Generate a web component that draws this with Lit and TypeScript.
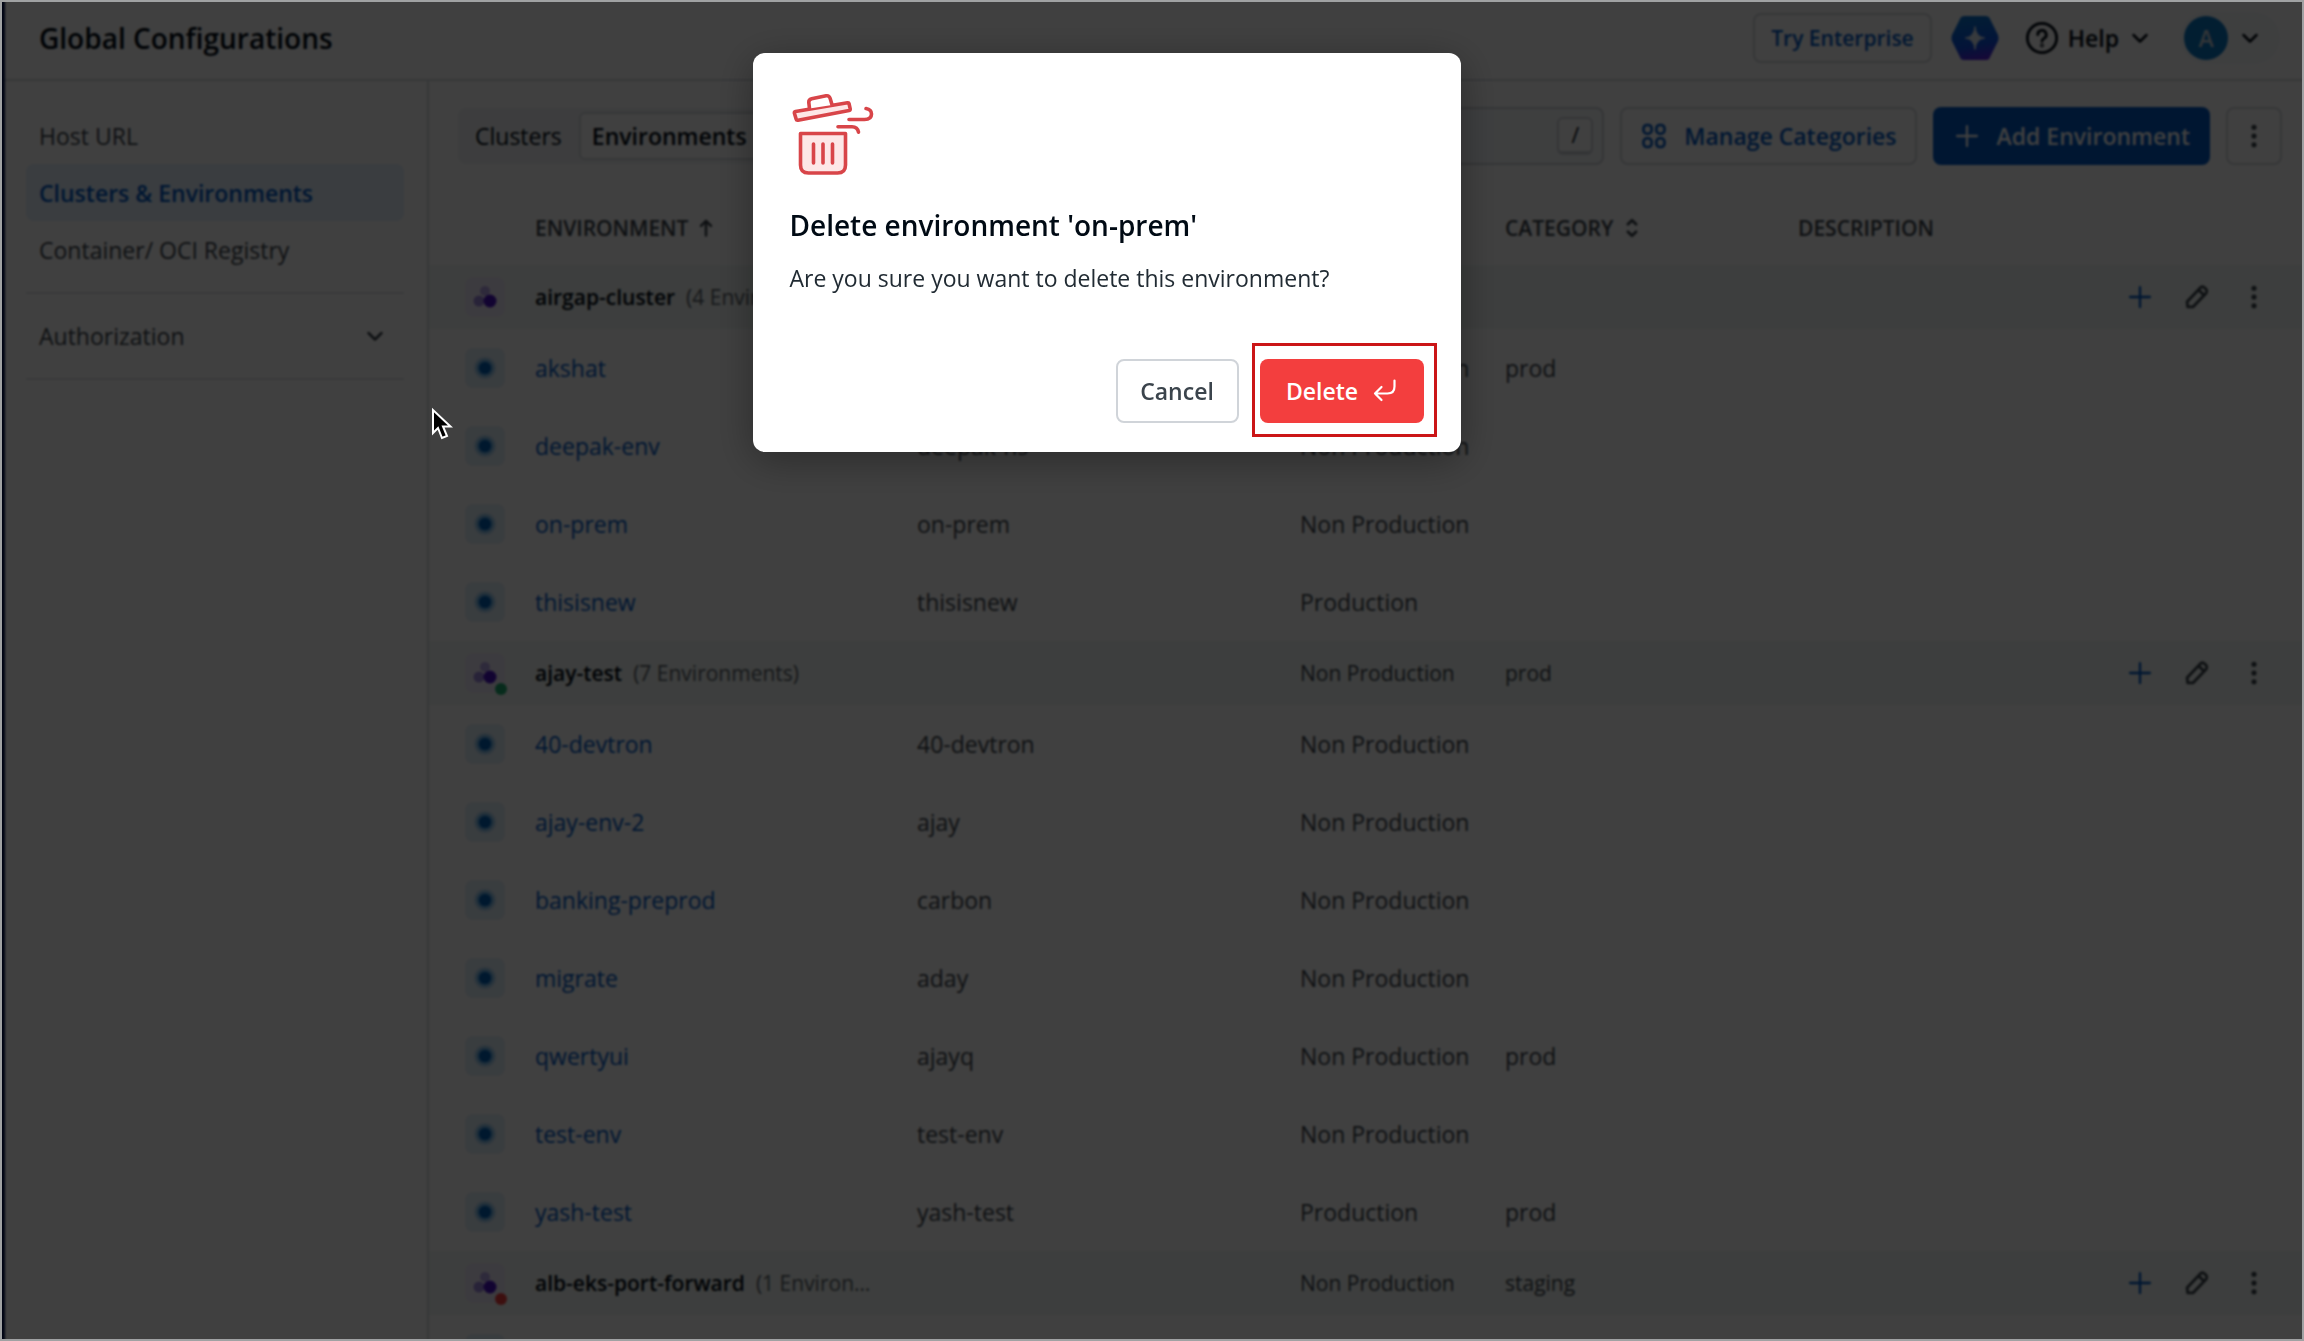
import { LitElement, html, css, svg, nothing } from "lit";
import { customElement } from "lit/decorators.js";

interface Env { name: string; ns: string; type: string; category?: string }
interface Cluster { name: string; count: string; type: string; category?: string; status?: string; envs: Env[] }

const NP = "Non Production";
const CLUSTERS: Cluster[] = [
  {
    name: "airgap-cluster", count: "(4 Environments)", type: NP, envs: [
      { name: "akshat", ns: "akshat", type: NP, category: "prod" },
      { name: "deepak-env", ns: "deepak-ns", type: NP },
      { name: "on-prem", ns: "on-prem", type: NP },
      { name: "thisisnew", ns: "thisisnew", type: "Production" },
    ],
  },
  {
    name: "ajay-test", count: "(7 Environments)", type: NP, category: "prod", status: "ok", envs: [
      { name: "40-devtron", ns: "40-devtron", type: NP },
      { name: "ajay-env-2", ns: "ajay", type: NP },
      { name: "banking-preprod", ns: "carbon", type: NP },
      { name: "migrate", ns: "aday", type: NP },
      { name: "qwertyui", ns: "ajayq", type: NP, category: "prod" },
      { name: "test-env", ns: "test-env", type: NP },
      { name: "yash-test", ns: "yash-test", type: "Production", category: "prod" },
    ],
  },
  {
    name: "alb-eks-port-forward", count: "(1 Environment)", type: NP, category: "staging", status: "bad", envs: [
      { name: "", ns: "", type: "" },
    ],
  },
];

const icon = (size: number, body: unknown) => html`<svg width=${size} height=${size} viewBox="0 0 24 24" fill="none"
  stroke="currentColor" stroke-width="2" stroke-linecap="round" stroke-linejoin="round" aria-hidden="true">${body}</svg>`;

const plus = icon(28, svg`<path d="M12 3.5v17M3.5 12h17"/>`);
const chevron = icon(24, svg`<path d="M5.500 9l6.500 6.500L18.500 9" stroke-width="2.500"/>`);
const kebab = icon(28, svg`<g fill="currentColor" stroke="none"><circle cx="12" cy="4.500" r="2.200"/><circle cx="12" cy="12" r="2.200"/><circle cx="12" cy="19.500" r="2.200"/></g>`);
const pencil = icon(28, svg`<path d="M4 20.500l-.5-4.500L15.500 3.500q1.500-1 3 .5l1.500 1.500q1 1.500 0 3L8.500 20.500zM13.500 6l4.500 4.500" stroke-width="2.400"/>`);
const grid = icon(28, svg`<g stroke-width="2.200"><rect x="3" y="2.500" width="7" height="7.500" rx="3"/><rect x="14" y="2.500" width="7" height="7.500" rx="3"/><rect x="3" y="14" width="7" height="7.500" rx="3"/><rect x="14" y="14" width="7" height="7.500" rx="3"/></g>`);
const sortUp = icon(20, svg`<path d="M12 21V4M6 9.500L12 3.500l6 6" stroke-width="3"/>`);
const sortBoth = icon(22, svg`<path d="M7.500 8L12 3.500 16.500 8M7.500 16l4.500 4.500 4.500-4.500" stroke-width="3"/>`);

@customElement("app-root")
export class AppRoot extends LitElement {
  static styles = css`
    :host { display: block; font-family: "Open Sans", "Noto Sans", sans-serif; font-size: 23px; line-height: 36px; color: #000a14; }
    * { box-sizing: border-box; }
    button, input { font: inherit; color: inherit; }
    button { background: none; border: 0; padding: 0; cursor: pointer; display: inline-flex; align-items: center; justify-content: center; }
    a { text-decoration: none; color: inherit; }
    svg { display: block; flex: none; }
    .shell { height: 100vh; overflow: hidden; display: flex; flex-direction: column; background: #fff; border-left: 5px solid #00124d; }
    .top { flex: none; height: 81px; border-bottom: 2px solid #d6dbdf; padding: 0 24px 4px 34px; display: flex; align-items: center; }
    h1 { margin: 0; flex: 1; font-size: 28px; font-weight: 600; }
    .tools { display: flex; align-items: center; }
    .outline { border: 2px solid #d6dade; border-radius: 8px; color: #0058c4; font-weight: 600; }
    .try { height: 50px; padding: 0 16px; font-size: 21px; }
    .spark { margin: 0 25px 0 18px; }
    .help { gap: 9px; font-weight: 600; }
    .user .chev { margin-left: 2px; }
    .user { margin-left: 28px; height: 52px; padding: 0 18px 0 4px; border-radius: 26px; background: #f7fafc; gap: 8px; }
    .avatar { width: 44px; height: 44px; border-radius: 50%; background: #0a78c4; color: #c5d2dc; display: grid; place-items: center; font-weight: 600; }
    .body { flex: 1; min-height: 0; display: flex; }
    .side { flex: none; width: 424px; border-right: 2px solid #d6dbdf; padding: 26px 23px 0 21px; display: flex; flex-direction: column; }
    .side a { height: 57px; padding: 0 13px; display: flex; align-items: center; border-radius: 8px; color: #3b444c; }
    .side a.on { background: #e5f2ff; color: #0058c4; font-weight: 600; }
    .rule { border: 0; border-top: 2px solid #e3e6ea; margin: 14px 0; width: 100%; }
    .auth { justify-content: space-between; height: 56px; padding: 0 17px 0 13px; color: #3b444c; }
    main { flex: 1; min-width: 0; display: flex; flex-direction: column; }
    .bar { flex: none; height: 110px; padding: 0 22px 0 29px; display: flex; align-items: center; gap: 16px; }
    .seg { display: flex; align-items: center; height: 56px; padding: 4px; background: #f2f4f6; border-radius: 8px; }
    .seg button { height: 48px; padding: 0 13px; border-radius: 6px; }
    .seg .on { background: #fff; font-weight: 600; border: 2px solid #d6dbdf; margin-left: 4px; padding: 0 11px; }
    .search { margin-left: auto; width: 380px; height: 58px; border: 2px solid #d0d4d9; border-radius: 8px; background: #f7fafc; display: flex; align-items: center; padding: 0 9px 0 16px; }
    .search input { flex: 1; min-width: 0; border: 0; background: none; outline: 0; }
    kbd { width: 36px; height: 38px; border: 2px solid #d0d4d9; border-bottom-width: 4px; border-radius: 6px; background: #fff; font: inherit; font-size: 21px; line-height: 32px; text-align: center; }
    .act { height: 58px; padding: 0 18px; gap: 16px; border-radius: 8px; font-weight: 600; }
    .primary { padding: 0 20px; background: #0058c4; color: #fff; }
    .more { width: 56px; height: 58px; color: #3b444c; }
    table { width: 100%; table-layout: fixed; border-collapse: collapse; text-align: left; }
    .c-icon { width: 106px; } .c-name { width: 382px; } .c-ns { width: 383px; } .c-type { width: 205px; } .c-cat { width: 293px; } .c-act { width: 193px; }
    th, td { padding: 0; white-space: nowrap; }
    th { height: 74px; font-weight: 600; font-size: 21px; color: #3b444c; }
    th button { gap: 8px; font-weight: 600; }
    .env td { height: 78px; }
    .env a { color: #0058c4; }
    .env { color: #3b444c; }
    .group { background: #f2f7f5; font-size: 21px; color: #3b444c; }
    .group td { height: 64px; }
    .gname { display: flex; gap: 11px; padding-right: 36px; }
    .gname b { font-weight: 600; color: #000a14; }
    .gname span { overflow: hidden; text-overflow: ellipsis; color: #596168; }
    .ico { margin-left: 36px; }
    .acts { display: flex; }
    .acts button { width: 57px; height: 48px; }
    .acts .add { color: #0058c4; }
    .veil { position: fixed; inset: 0; background: rgba(0, 0, 0, 0.75); backdrop-filter: blur(1px); display: flex; justify-content: center; align-items: flex-start; padding: 53px 91px 0 0; }
    .frame { position: fixed; inset: 0; pointer-events: none; border: 2px solid #a0a2a3; }
    .dialog { width: 708px; background: #fff; border-radius: 12px; padding: 37px 37px 29px; display: flex; flex-direction: column; box-shadow: 0 8px 40px rgba(0, 0, 0, 0.35); }
    .dialog h2 { margin: 29px 0 0; font-size: 28px; line-height: 40px; font-weight: 600; }
    .dialog p { margin: 15px 0 0; color: #212b33; }
    .foot { display: flex; justify-content: flex-end; gap: 21px; margin-top: 63px; }
    .foot button { height: 64px; border-radius: 8px; font-weight: 600; }
    .cancel { width: 123px; border: 2px solid #d0d4d9; color: #3b444c; }
    .delete { width: 164px; background: #f33e3e; color: #fff; gap: 15px; position: relative; }
    .mark { position: absolute; inset: -16px -13px -14px -8px; border: 3px solid #cb1517; pointer-events: none; }
    .cursor { position: fixed; left: 430px; top: 407px; }
  `;

  private row(e: Env) {
    return html`<tr class="env">
      <td><svg class="ico" width="40" height="40" viewBox="0 0 40 40" aria-hidden="true"><rect width="40" height="40" rx="8" fill="#e4f1fa"/><circle cx="20" cy="20" r="11" fill="#b4d8f2"/><circle cx="20" cy="20" r="8.500" fill="#6aaee2"/><circle cx="20" cy="20" r="6" fill="#0060b8"/></svg></td>
      <td>${e.name ? html`<a href="#${e.name}">${e.name}</a>` : nothing}</td><td>${e.ns}</td><td>${e.type}</td><td>${e.category ?? ""}</td><td></td><td></td>
    </tr>`;
  }

  private group(c: Cluster) {
    return html`<tr class="group">
      <td><svg class="ico" width="44" height="44" viewBox="0 0 44 44" aria-hidden="true"><rect width="40" height="40" y="2" rx="8" fill="#f0ebfa"/>
        <circle cx="20" cy="16" r="5" fill="#b8a6ea"/><circle cx="14" cy="26" r="5.500" fill="#a08ae0"/><circle cx="25" cy="26" r="6.500" fill="#4a12c4"/>
        ${c.status ? svg`<circle cx="36" cy="38" r="6" fill=${c.status === "ok" ? "#1dad70" : "#f33e3e"}/>` : nothing}</svg></td>
      <td><div class="gname"><b>${c.name}</b><span>${c.count}</span></div></td><td></td><td>${c.type}</td><td>${c.category ?? ""}</td><td></td>
      <td><div class="acts"><button class="add" aria-label="Add">${plus}</button><button aria-label="Edit">${pencil}</button><button aria-label="More">${kebab}</button></div></td>
    </tr>`;
  }

  render() {
    return html`
      <div class="shell">
        <header class="top">
          <h1>Global Configurations</h1>
          <div class="tools">
            <button class="outline try">Try Enterprise</button>
            <button class="spark" aria-label="Assistant"><svg width="50" height="48" viewBox="0 0 52 48"><defs><linearGradient id="hex" x1="0.400" y1="0" x2="0.600" y2="1"><stop offset="0.100" stop-color="#0a70d0"/><stop offset="0.650" stop-color="#0c50e0"/><stop offset="1" stop-color="#5a20dc"/></linearGradient></defs>
              <path d="M15 1h22q3 0 4 2l9 18q1 3 0 6l-9 18q-1 2-4 2H15q-3 0-4-2L2 27q-1-3 0-6l9-18q1-2 4-2z" fill="url(#hex)"/><path d="M26 12q1 11 10 12-9 1-10 12-1-11-10-12 9-1 10-12z" fill="#dbe6f2" stroke="#dbe6f2"/></svg></button>
            <button class="help"><svg width="34" height="34" viewBox="0 0 36 36" fill="none" stroke="currentColor" stroke-width="3" stroke-linecap="round"><circle cx="18" cy="18" r="15.500"/><path d="M13.500 14.500a4.500 4.500 0 1 1 6.500 4q-2 1-2 3"/><circle cx="18" cy="26" r="0.600"/></svg>Help<span class="chev">${chevron}</span></button>
            <button class="user" aria-label="Account"><span class="avatar">A</span><span class="chev">${chevron}</span></button>
          </div>
        </header>
        <div class="body">
          <nav class="side">
            <a href="#host">Host URL</a><a class="on" href="#clusters">Clusters &amp; Environments</a><a href="#registry">Container/ OCI Registry</a>
            <hr class="rule"><button class="auth">Authorization${chevron}</button><hr class="rule">
          </nav>
          <main>
            <div class="bar">
              <div class="seg"><button>Clusters</button><button class="on">Environments</button></div>
              <label class="search"><input type="text" aria-label="Search"><kbd>/</kbd></label>
              <button class="outline act">${grid}Manage Categories</button>
              <button class="act primary">${plus}Add Environment</button>
              <button class="outline more" aria-label="More actions">${kebab}</button>
            </div>
            <table>
              <colgroup><col class="c-icon"><col class="c-name"><col class="c-ns"><col class="c-type"><col class="c-cat"><col><col class="c-act"></colgroup>
              <thead><tr><th></th><th><button>ENVIRONMENT ${sortUp}</button></th><th>NAMESPACE</th><th>TYPE</th><th><button>CATEGORY ${sortBoth}</button></th><th>DESCRIPTION</th><th></th></tr></thead>
              <tbody>${CLUSTERS.map((c) => html`${this.group(c)}${c.envs.map((e) => this.row(e))}`)}</tbody>
            </table>
          </main>
        </div>
      </div>
      <div class="veil">
        <section class="dialog" role="dialog" aria-modal="true" aria-labelledby="title">
          <svg width="86" height="86" viewBox="10 10 86 86" fill="none" stroke="#d84549" stroke-width="3.600" stroke-linecap="round" stroke-linejoin="round" aria-hidden="true">
            <path d="M20.500 53.500h45V85q0 8-8 8h-29q-8 0-8-8z" fill="#fde7e7"/><path d="M33.500 64v19M43 64v19M52.500 64v19"/>
            <path d="M15.500 31.500L67.500 22.800q1.300-.2 1.600 1l1.100 5q.2 1.400-1.100 1.700L18 40.200q-1.500.2-1.800-1l-1.800-6q-.2-1.400 1.100-1.700z" fill="#fde7e7"/>
            <path d="M29.500 28.500l-.7-6q-.2-3 2.800-3.700l14.500-3q3-.5 4 2.500l2 6.700" fill="#fff"/>
            <path d="M69 39.500h15.500q7 0 7-5.500 0-4.500-5.500-5.500M58 46.800h14q5.500 0 6.500 5.400"/>
          </svg>
          <h2 id="title">Delete environment 'on-prem'</h2>
          <p>Are you sure you want to delete this environment?</p>
          <div class="foot">
            <button class="cancel">Cancel</button>
            <button class="delete">Delete<svg width="24" height="24" viewBox="0 0 24 24" fill="none" stroke="currentColor" stroke-width="2.200" stroke-linecap="round" stroke-linejoin="round" aria-hidden="true"><path d="M21.500 1.500v6q0 7-7 7H2M8.500 8L2 14.500l6.500 6.500"/></svg><span class="mark"></span></button>
          </div>
        </section>
      </div>
      <svg class="cursor" width="24" height="34" viewBox="0 0 24 34" aria-hidden="true"><path d="M3 3v23l5-5 4 10 5-2-4-9.500h7.500z" fill="#000" stroke="#fff" stroke-width="2"/></svg>
      <div class="frame"></div>`;
  }
}
